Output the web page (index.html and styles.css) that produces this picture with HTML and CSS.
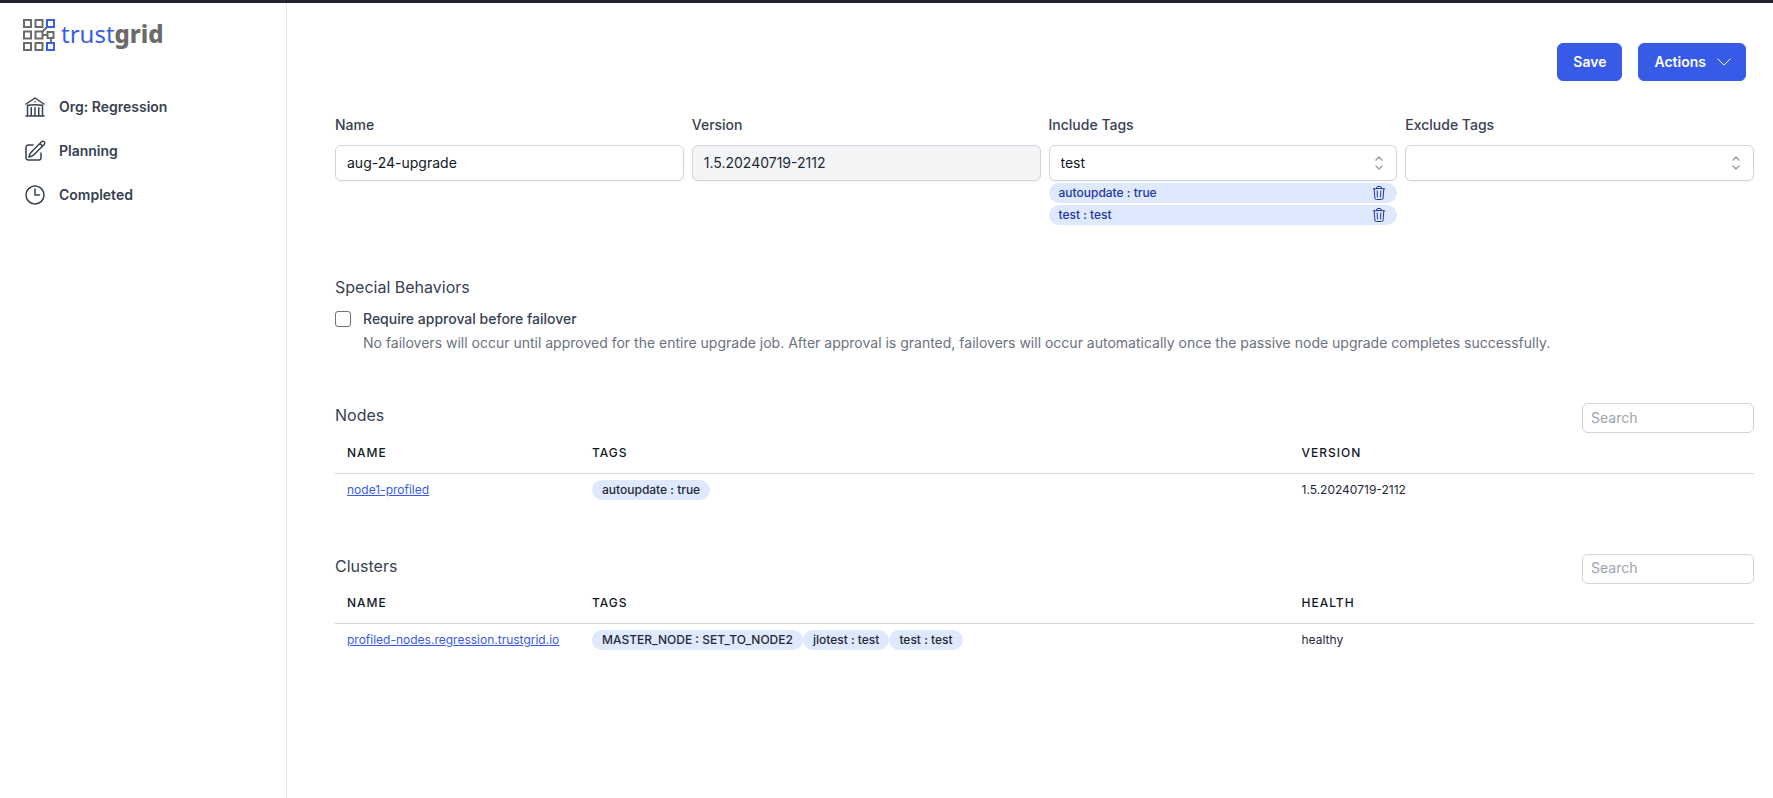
FILE: index.html
```html
<!DOCTYPE html>
<html lang="en">
<head>
<meta charset="utf-8">
<meta name="viewport" content="width=device-width, initial-scale=1">
<title>Trustgrid – Planning</title>
<link rel="stylesheet" href="styles.css">
</head>
<body>
<svg class="sprite" aria-hidden="true">
  <symbol id="updown" viewBox="0 0 20 20"><path d="M7 7l3-3 3 3m0 6l-3 3-3-3"/></symbol>
  <symbol id="trash" viewBox="0 0 24 24"><path d="m14.74 9-.346 9m-4.788 0L9.26 9m9.968-3.21c.342.052.682.107 1.022.166m-1.022-.165L18.16 19.673a2.25 2.25 0 0 1-2.244 2.077H8.084a2.25 2.25 0 0 1-2.244-2.077L4.772 5.79m14.456 0a48.108 48.108 0 0 0-3.478-.397m-12 .562c.34-.059.68-.114 1.022-.165m0 0a48.11 48.11 0 0 1 3.478-.397m7.5 0v-.916c0-1.18-.91-2.164-2.09-2.201a51.964 51.964 0 0 0-3.32 0c-1.18.037-2.09 1.022-2.09 2.201v.916m7.5 0a48.667 48.667 0 0 0-7.5 0"/></symbol>
</svg>
<div class="app">
  <aside class="sidebar">
    <a class="logo" href="#">
      <svg class="logo-mark" viewBox="0 0 32 32" aria-hidden="true">
        <g class="logo-gray">
          <path d="M19.5 12.500l5-5M20 16h5M28 19v5"/>
          <rect x="1" y="1" width="7" height="7"/>
          <rect x="12.500" y="1" width="7" height="7"/>
          <rect x="1" y="12.500" width="7" height="7"/>
          <rect x="12.500" y="12.500" width="7" height="7"/>
          <rect x="24.500" y="13" width="6" height="6"/>
          <rect x="1" y="24" width="7" height="7"/>
          <rect x="12.500" y="24" width="7" height="7"/>
        </g>
        <g class="logo-blue">
          <rect x="24" y="1" width="7" height="7"/>
          <rect x="24" y="24" width="7" height="7"/>
        </g>
      </svg>
      <span class="logo-text">trust<b>grid</b></span>
    </a>
    <nav class="nav">
      <a href="#"><svg viewBox="0 0 24 24" aria-hidden="true"><path d="M12 21v-8.25M15.75 21v-8.25M8.25 21v-8.25M3 9l9-6 9 6m-1.5 12V10.332A48.36 48.36 0 0 0 12 9.75c-2.551 0-5.056.2-7.5.582V21M3 21h18M12 6.75h.008v.008H12V6.75Z"/></svg>Org: Regression</a>
      <a href="#"><svg viewBox="0 0 24 24" aria-hidden="true"><path d="m16.862 4.487 1.687-1.688a1.875 1.875 0 1 1 2.652 2.652L10.582 16.07a4.5 4.5 0 0 1-1.897 1.13L6 18l.8-2.685a4.5 4.5 0 0 1 1.13-1.897l8.932-8.931Zm0 0L19.5 7.125M18 14v4.75A2.25 2.25 0 0 1 15.75 21H5.25A2.25 2.25 0 0 1 3 18.75V8.25A2.25 2.25 0 0 1 5.25 6H10"/></svg>Planning</a>
      <a href="#"><svg viewBox="0 0 24 24" aria-hidden="true"><path d="M12 6v6h4.5m4.5 0a9 9 0 1 1-18 0 9 9 0 0 1 18 0Z"/></svg>Completed</a>
    </nav>
  </aside>
  <main class="main">
    <div class="toolbar">
      <button class="btn" type="button">Save</button>
      <button class="btn" type="button">Actions<svg viewBox="0 0 24 24" aria-hidden="true"><path d="m19.5 8.25-7.5 7.5-7.5-7.5"/></svg></button>
    </div>

    <form class="fields">
      <div class="field">
        <label for="name">Name</label>
        <div class="control"><input id="name" type="text" value="aug-24-upgrade"></div>
      </div>
      <div class="field">
        <label for="version">Version</label>
        <div class="control readonly"><input id="version" type="text" value="1.5.20240719-2112" readonly></div>
      </div>
      <div class="field">
        <label for="include">Include Tags</label>
        <div class="control"><input id="include" type="text" value="test"><button type="button" aria-label="Show include tags"><svg><use href="#updown"/></svg></button></div>
        <ul class="picked">
          <li>autoupdate : true<button type="button" aria-label="Remove autoupdate : true"><svg><use href="#trash"/></svg></button></li>
          <li>test : test<button type="button" aria-label="Remove test : test"><svg><use href="#trash"/></svg></button></li>
        </ul>
      </div>
      <div class="field">
        <label for="exclude">Exclude Tags</label>
        <div class="control"><input id="exclude" type="text"><button type="button" aria-label="Show exclude tags"><svg><use href="#updown"/></svg></button></div>
      </div>
    </form>

    <section class="behaviors">
      <h2>Special Behaviors</h2>
      <div class="option">
        <input id="approval" type="checkbox" aria-describedby="approval-help">
        <div>
          <label for="approval">Require approval before failover</label>
          <p id="approval-help">No failovers will occur until approved for the entire upgrade job. After approval is granted, failovers will occur automatically once the passive node upgrade completes successfully.</p>
        </div>
      </div>
    </section>

    <section class="listing">
      <div class="listing-head">
        <h2>Nodes</h2>
        <input class="search" type="text" placeholder="Search" aria-label="Search nodes">
      </div>
      <table>
        <colgroup><col class="col-name"><col class="col-tags"><col></colgroup>
        <thead><tr><th>Name</th><th>Tags</th><th>Version</th></tr></thead>
        <tbody><tr>
          <td><a href="#">node1-profiled</a></td>
          <td><div class="tags"><span class="tag">autoupdate : true</span></div></td>
          <td>1.5.20240719-2112</td>
        </tr></tbody>
      </table>
    </section>

    <section class="listing">
      <div class="listing-head">
        <h2>Clusters</h2>
        <input class="search" type="text" placeholder="Search" aria-label="Search clusters">
      </div>
      <table>
        <colgroup><col class="col-name"><col class="col-tags"><col></colgroup>
        <thead><tr><th>Name</th><th>Tags</th><th>Health</th></tr></thead>
        <tbody><tr>
          <td><a href="#">profiled-nodes.regression.trustgrid.io</a></td>
          <td><div class="tags"><span class="tag">MASTER_NODE : SET_TO_NODE2</span><span class="tag">jlotest : test</span><span class="tag">test : test</span></div></td>
          <td>healthy</td>
        </tr></tbody>
      </table>
    </section>
  </main>
</div>
</body>
</html>
```

FILE: styles.css
```css
*, *::before, *::after { box-sizing: border-box; }

body {
  margin: 0;
  background: #fff;
  color: #111827;
  font: 400 14px/20px Inter, "Liberation Sans", sans-serif;
}

h2, p, ul { margin: 0; padding: 0; }
button, input { font: inherit; color: inherit; }
button { cursor: pointer; }

svg {
  fill: none;
  stroke: currentColor;
  stroke-width: 1.5;
  stroke-linecap: round;
  stroke-linejoin: round;
}

.sprite { display: none; }

.app {
  display: flex;
  min-height: 100vh;
  border-top: 3px solid #212529;
}

/* Sidebar */
.sidebar {
  flex: none;
  width: 287px;
  padding: 16px 23px;
  border-right: 1px solid #e5e7eb;
}

.logo {
  display: flex;
  gap: 6px;
  height: 32px;
  align-items: center;
  text-decoration: none;
}

.logo-mark {
  width: 32px;
  height: 32px;
  stroke-width: 2;
  stroke-linecap: butt;
  stroke-linejoin: miter;
}

.logo-gray { stroke: #6b6b6b; }
.logo-blue { stroke: #375fe3; }

.logo-text {
  padding-bottom: 2px;
  color: #375fe3;
  font: 400 24px/30px "Noto Sans", sans-serif;
}

.logo-text b { color: #6b6b6b; font-weight: 800; }

.nav {
  display: flex;
  flex-direction: column;
  gap: 20px;
  margin-top: 44px;
}

.nav a {
  display: flex;
  align-items: center;
  gap: 12px;
  color: #374151;
  font-weight: 600;
  text-decoration: none;
}

.nav svg { width: 24px; height: 24px; }

/* Main column */
.main {
  flex: 1;
  min-width: 0;
  padding: 40px 19px 40px 48px;
}

.toolbar {
  display: flex;
  justify-content: flex-end;
  gap: 16px;
  padding-right: 8px;
}

.btn {
  display: flex;
  align-items: center;
  gap: 8px;
  height: 38px;
  padding: 0 15px;
  border: 1px solid #375be7;
  border-radius: 6px;
  background: #375be7;
  color: #fff;
  font-weight: 600;
}

.btn svg { width: 20px; height: 20px; margin-right: -4px; stroke-width: 1.2; }

.fields {
  display: grid;
  grid-template-columns: repeat(4, minmax(0, 1fr));
  gap: 8px;
  min-height: 110px;
  margin-top: 34px;
}

.field label {
  display: block;
  margin-bottom: 10px;
  color: #374151;
  font-weight: 500;
}

.control {
  display: flex;
  align-items: center;
  height: 36px;
  border: 1px solid #d1d5db;
  border-radius: 6px;
  background: #fff;
  box-shadow: 0 1px 2px rgb(0 0 0 / 5%);
}

.control.readonly { background: #f3f4f6; color: #1f2937; }

.control input {
  flex: 1;
  min-width: 0;
  padding: 0 11px;
  border: 0;
  outline: 0;
  background: none;
}

.control button, .picked button {
  display: flex;
  padding: 0;
  border: 0;
  background: none;
  color: inherit;
}

.control button { padding: 0 7px; color: #9ca3af; }
.control svg { width: 20px; height: 20px; }

.picked {
  display: flex;
  flex-direction: column;
  gap: 2px;
  margin-top: 2px;
  list-style: none;
}

.picked li {
  display: flex;
  align-items: center;
  justify-content: space-between;
  height: 20px;
  padding: 0 10px;
  border-radius: 10px;
  background: #dfe9fd;
  color: #2336a8;
  font-size: 12px;
  font-weight: 500;
}

.picked svg { width: 16px; height: 16px; }

h2 {
  color: #374151;
  font-size: 16px;
  font-weight: 400;
  line-height: 24px;
}

.behaviors { margin-top: 50px; }

.option {
  display: flex;
  gap: 12px;
  margin-top: 10px;
}

.option input {
  appearance: none;
  flex: none;
  width: 16px;
  height: 16px;
  margin: 2px 0;
  border: 1px solid #6b7280;
  border-radius: 3px;
  background: #fff;
}

.option label {
  display: block;
  color: #374151;
  font-weight: 500;
}

.option p { margin-top: 4px; color: #6b7280; }

/* Tables */
.listing { margin-top: 50px; }
.listing + .listing { margin-top: 48px; }

.listing-head {
  display: flex;
  justify-content: space-between;
  align-items: flex-start;
}

.search {
  width: 172px;
  height: 30px;
  padding: 0 8px 2px;
  border: 1px solid #d1d5db;
  border-radius: 6px;
  background: #fff;
}

.search::placeholder { color: #9ca3af; }

table {
  width: 100%;
  border-collapse: collapse;
  table-layout: fixed;
  font-size: 12px;
  line-height: 16px;
}

.col-name { width: 245px; }
.col-tags { width: 50%; }

th {
  height: 40px;
  padding: 0 12px;
  border-bottom: 1px solid #d1d5db;
  font-weight: 500;
  letter-spacing: 1px;
  text-align: left;
  text-transform: uppercase;
}

td { padding: 6px 12px; color: #1f2937; white-space: nowrap; }
td a { color: #375be7; }

.tags { display: flex; }

.tag {
  padding: 2px 10px;
  border-radius: 10px;
  background: #dfe9fd;
  font-weight: 500;
}
```
